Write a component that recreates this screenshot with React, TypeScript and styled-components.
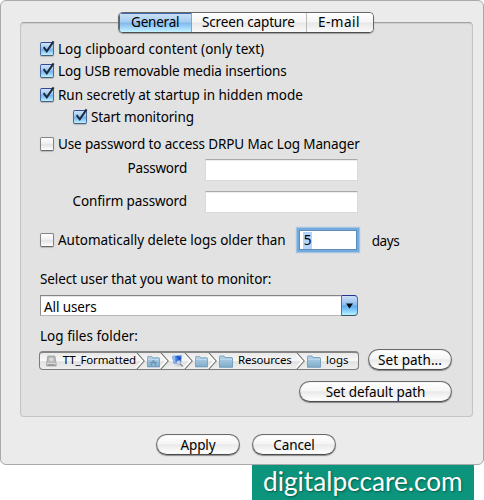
import React from 'react';
import styled, { createGlobalStyle, css } from 'styled-components';

const Global = createGlobalStyle`
  * { box-sizing: border-box; }
  body { margin: 0; background: #fff; }
  button, input { font: inherit; color: inherit; }
`;

const Page = styled.div`
  width: 484px;
  height: 500px;
  font: 13.5px/22px "Noto Sans", sans-serif;
  color: #000;
  overflow: hidden;
`;

const Dialog = styled.main`
  width: 484px;
  height: 465px;
  padding: 11px 11px 0 19px;
  background: #ebebeb;
  border: 1px solid #a9a9a9;
  border-radius: 6px;
  display: flex;
  flex-direction: column;
  align-items: flex-start;
`;

const Tabs = styled.div`
  z-index: 1;
  display: flex;
  width: 256px;
  height: 21px;
  margin-left: 98px;
  border: 1px solid #686868;
  border-bottom-color: #4d4d4d;
  border-radius: 5px;
  overflow: hidden;
  box-shadow: 0 1px 1px rgba(0, 0, 0, 0.3);
`;

const Tab = styled.button<{ $width: number; $active?: boolean; $spacing: number; $pad: number }>`
  width: ${p => p.$width}px;
  padding: 0 0 0 ${p => p.$pad}px;
  border: 0;
  border-right: 1px solid #b9b9b9;
  text-align: left;
  white-space: nowrap;
  line-height: 19px;
  letter-spacing: ${p => p.$spacing}px;
  background: linear-gradient(#fff 0%, #f5f5f5 48%, #e7e7e7 52%, #fafafa 100%);
  &:last-child { border-right: 0; }
  ${p => p.$active && css`
    border-right-color: #76a9d8;
    background: linear-gradient(#cfe2f6 0%, #a5cdf2 47%, #80b9ec 53%, #a9dcfd 82%, #c5f2ff 100%);
    box-shadow: inset 1px 1px 0 #3f67b0;
  `}
`;

const Panel = styled.section`
  width: 453px;
  height: 395px;
  margin-top: -11px;
  padding: 15px 19px 0;
  background: #e2e2e2;
  border: 1px solid #c4c4c4;
  border-top-color: #a2a2a2;
  border-radius: 4px;
  box-shadow: inset 0 1px 1px #cfcfcf;
`;

const Row = styled.div<{ $top?: number; $height?: number; $indent?: number }>`
  display: flex;
  align-items: center;
  height: ${p => p.$height ?? 22}px;
  margin-top: ${p => p.$top ?? 0}px;
  padding-left: ${p => p.$indent ?? 0}px;
`;

const Text = styled.span<{ $spacing?: number }>`
  white-space: nowrap;
  letter-spacing: ${p => p.$spacing ?? 0}px;
`;

const FieldLabel = styled(Text)`
  width: 147px;
  margin-right: 18px;
  padding-bottom: 4px;
  text-align: right;
`;

const FieldLabelLow = styled(FieldLabel)`
  padding-bottom: 3px;
`;

const Unit = styled(Text)`
  padding-top: 2px;
`;

const Box = styled.span<{ $on?: boolean }>`
  flex: none;
  width: 14px;
  height: 14px;
  margin-right: 4px;
  border: 1px solid #858585;
  border-bottom-color: #686868;
  border-radius: 2px;
  background: linear-gradient(#fff, #f0f0f0 45%, #e4e4e4 55%, #fff);
  box-shadow: 0 1px 1px rgba(0, 0, 0, 0.18);
  ${p => p.$on && css`
    border-color: #31479b #4968a0 #46627d;
    background: linear-gradient(#d2e5fa, #95c4f0 45%, #74b4ee 55%, #bdf1ff);
  `}
  svg { display: block; margin: -3px 0 0 -1px; overflow: visible; }
`;

const Check = ({ on }: { on?: boolean }) => (
  <Box $on={on} role="checkbox" aria-checked={!!on}>
    {on && (
      <svg width="16" height="16" viewBox="0 0 16 16">
        <path d="M3.6 7.2 L6.8 11.4 L13.6 1.4" fill="none" stroke="#1c2a3c" strokeWidth="2" />
      </svg>
    )}
  </Box>
);

const Input = styled.input`
  width: 153px;
  height: 22px;
  border: 1px solid #dadada;
  border-top-color: #a9a9a9;
  background: #fff;
  box-shadow: inset 0 1px 0 #ececec;
  outline: none;
`;

const Days = styled.div`
  width: 58px;
  height: 20px;
  margin: 0 15px 0 13px;
  padding: 1px 0 0 3px;
  border: 1px solid #5d8dbb;
  background: #fff;
  box-shadow: 0 0 0 2px #74a9dc, 0 0 1px 3px #a3c5e5;
  line-height: 17px;
`;

const Selected = styled.span`
  display: inline-block;
  width: 9px;
  height: 17px;
  background: #b2d4fd;
  padding-left: 1px;
`;

const Combo = styled.div`
  display: flex;
  width: 318px;
  height: 21px;
  margin-top: 5px;
`;

const ComboValue = styled.div`
  flex: 1;
  padding-left: 3px;
  border: 1px solid #b6b6b6;
  border-top-color: #858585;
  border-left-color: #8d8d8d;
  border-right: 0;
  background: #fff;
  box-shadow: inset 0 1px 0 #e6e6e6;
  letter-spacing: -0.1px;
`;

const ComboArrow = styled.button`
  display: flex;
  align-items: center;
  justify-content: center;
  width: 17px;
  padding: 0;
  border: 1px solid #4c719f;
  border-top-color: #26338f;
  border-bottom-color: #3b5365;
  border-radius: 0 4px 4px 0;
  background: linear-gradient(#cbdff6, #91bff0 45%, #62a8ea 52%, #7cc6f9 72%, #b9f4ff);
`;

const PathLine = styled.div`
  display: flex;
  align-items: flex-start;
  height: 22px;
  margin-top: 2px;
`;

const PathBar = styled.div`
  display: flex;
  width: 320px;
  height: 19px;
  margin: 2px 9px 0 -1px;
  border: 1px solid #7b7b7b;
  border-top: 2px solid #858585;
  border-radius: 4px;
  overflow: hidden;
  background: linear-gradient(#e9e9e9, #f8f8f8 48%, #e2e2e2 54%, #efefef);
  font-size: 11.5px;
  line-height: 14px;
`;

const Crumb = styled.div<{ $width: number; $pad?: number }>`
  display: flex;
  flex: none;
  align-items: center;
  width: ${p => p.$width}px;
  height: 16px;
  padding-left: ${p => p.$pad ?? 2}px;
`;

const CrumbText = styled(Text)<{ $gap: number }>`
  margin-left: ${p => p.$gap}px;
  margin-top: -3px;
`;

const Arrow = styled.svg`
  flex: none;
  margin-left: auto;
`;

const Chevron = () => (
  <Arrow width="9" height="16" viewBox="0 0 9 16">
    <path d="M-1 -.5 L6.6 8 L-1 16.5" fill="none" stroke="#fff" strokeWidth="2" />
    <path d="M.5 -.5 L8.2 8 L.5 16.5" fill="none" stroke="#777" strokeWidth="1.1" />
  </Arrow>
);

const Folder = ({ mark }: { mark?: boolean }) => (
  <svg width="14" height="13" viewBox="0 0 14 13">
    <defs>
      <linearGradient id="folder" x1="0" y1="0" x2="0" y2="1">
        <stop stopColor="#b5d3e7" />
        <stop offset="1" stopColor="#7fadcb" />
      </linearGradient>
    </defs>
    <path d="M.5 12.3 V2 Q.5 1 1.5 1 H5 L6.2 2.5 H12.6 Q13.5 2.5 13.5 3.5 V12.3 Z" fill="url(#folder)" stroke="#6895b5" strokeWidth=".8" />
    <path d="M1 4.3 H13" stroke="#c8e0ef" strokeWidth=".8" />
    {mark && <path d="M7 4.9 L4.2 11.2 M7 4.9 L9.8 11.2 M3 7.6 H11" fill="none" stroke="#5f90b2" strokeWidth="1" />}
  </svg>
);

const Disk = () => (
  <svg width="13" height="14" viewBox="0 0 13 14">
    <path d="M2.2 1 H10.8 L12.3 10.5 V13 H.7 V10.5 Z" fill="#bebebe" stroke="#8b8b8b" strokeWidth=".8" />
    <ellipse cx="6.5" cy="5.2" rx="3.2" ry="3" fill="#dadada" stroke="#a1a1a1" strokeWidth=".7" />
    <path d="M1 10.3 H12" stroke="#eee" strokeWidth=".8" />
    <path d="M2.5 11.8 H10.5" stroke="#777" strokeWidth="1" />
  </svg>
);

const AppIcon = () => (
  <svg width="14" height="14" viewBox="0 0 14 14">
    <path d="M1 1.5 L11.5 .8 L11 9 L3 10 Z" fill="#3f7de0" />
    <path d="M1 1.5 L4.5 1.2 L5 9.8 L3 10 Z" fill="#92b9ee" />
    <path d="M6.5 2 L9.8 4 L7 8" fill="none" stroke="#1d4cc1" strokeWidth="1.8" />
    <path d="M3 11 L11 10.2 L13 13 L5 13.2 Z" fill="#d4d8df" />
    <circle cx="8.2" cy="8.6" r="2.2" fill="#c5dcf4" stroke="#8c9cb3" strokeWidth=".7" />
    <path d="M9.8 10.1 L12.7 12.8" stroke="#77818f" strokeWidth="1.4" />
  </svg>
);

const Button = styled.button<{ $width: number; $spacing?: number }>`
  flex: none;
  width: ${p => p.$width}px;
  height: 21px;
  padding: 0;
  border: 1px solid #6a6a6a;
  border-bottom-color: #4c4c4c;
  border-radius: 11px;
  background: linear-gradient(#fff 0%, #f6f6f6 45%, #e9e9e9 52%, #f7f7f7 80%, #fff 100%);
  box-shadow: 0 1px 1px rgba(0, 0, 0, 0.4), inset 0 0 1px rgba(0, 0, 0, 0.35);
  line-height: 18px;
  letter-spacing: ${p => p.$spacing ?? 0}px;
  white-space: nowrap;
`;

const DefaultLine = styled.div`
  display: flex;
  justify-content: flex-end;
  width: 412px;
  margin-top: 10px;
`;

const Actions = styled.div`
  display: flex;
  gap: 12px;
  margin: 17px 0 0 136px;
`;

const Banner = styled.footer`
  width: 222px;
  height: 35px;
  margin-left: 252px;
  background: #0c957c;
  color: #fff;
  font: 26.2px/32px Lato, sans-serif;
  padding: 0 0 0 11px;
  white-space: nowrap;
  text-shadow: 1px 1px 2px rgba(0, 50, 40, 0.6);
`;

export default function App() {
  return (
    <>
      <Global />
      <Page>
        <Dialog>
          <Tabs>
            <Tab $width={73} $pad={12} $spacing={-0.2} $active>General</Tab>
            <Tab $width={115} $pad={10} $spacing={-0.15}>Screen capture</Tab>
            <Tab $width={66} $pad={11} $spacing={0.5}>E-mail</Tab>
          </Tabs>
          <Panel>
            <Row><Check on /><Text $spacing={0.04}>Log clipboard content (only text)</Text></Row>
            <Row><Check on /><Text $spacing={-0.14}>Log USB removable media insertions</Text></Row>
            <Row $top={2}><Check on /><Text $spacing={-0.04}>Run secretly at startup in hidden mode</Text></Row>
            <Row $indent={33}><Check on /><Text $spacing={-0.15}>Start monitoring</Text></Row>
            <Row $top={5}><Check /><Text $spacing={-0.13}>Use password to access DRPU Mac Log Manager</Text></Row>
            <Row $top={4}><FieldLabel $spacing={-0.21}>Password</FieldLabel><Input type="password" aria-label="Password" /></Row>
            <Row $top={10}><FieldLabelLow $spacing={-0.1}>Confirm password</FieldLabelLow><Input type="password" aria-label="Confirm password" /></Row>
            <Row $top={15} $height={24}>
              <Check /><Text $spacing={-0.03}>Automatically delete logs older than</Text>
              <Days><Selected>5</Selected></Days>
              <Unit $spacing={-0.35}>days</Unit>
            </Row>
            <Row $top={16}><Text $spacing={-0.1}>Select user that you want to monitor:</Text></Row>
            <Combo>
              <ComboValue>All users</ComboValue>
              <ComboArrow aria-label="Show users">
                <svg width="7" height="6" viewBox="0 0 7 6"><path d="M0 .5 H7 L3.5 5.5 Z" fill="#060a12" /></svg>
              </ComboArrow>
            </Combo>
            <Row $top={9}><Text $spacing={0.02}>Log files folder:</Text></Row>
            <PathLine>
              <PathBar>
                <Crumb $width={105} $pad={6}><Disk /><CrumbText $gap={6} $spacing={-0.13}>TT_Formatted</CrumbText><Chevron /></Crumb>
                <Crumb $width={24}><Folder mark /><Chevron /></Crumb>
                <Crumb $width={24}><AppIcon /><Chevron /></Crumb>
                <Crumb $width={24}><Folder /><Chevron /></Crumb>
                <Crumb $width={88}><Folder /><CrumbText $gap={5} $spacing={-0.19}>Resources</CrumbText><Chevron /></Crumb>
                <Crumb $width={53}><Folder /><CrumbText $gap={5}>logs</CrumbText></Crumb>
              </PathBar>
              <Button $width={84} $spacing={0.04}>Set path...</Button>
            </PathLine>
            <DefaultLine><Button $width={153} $spacing={-0.08}>Set default path</Button></DefaultLine>
          </Panel>
          <Actions>
            <Button $width={84} $spacing={-0.1}>Apply</Button>
            <Button $width={84} $spacing={-0.1}>Cancel</Button>
          </Actions>
        </Dialog>
        <Banner>digitalpccare.com</Banner>
      </Page>
    </>
  );
}
